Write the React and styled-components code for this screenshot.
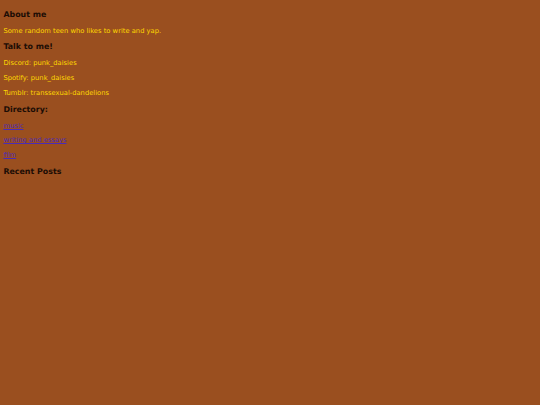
import React from 'react';
import styled, { createGlobalStyle } from 'styled-components';

const Global = createGlobalStyle`
  html, body {
    background: #9a4f1f;
  }
  body {
    margin: 3.4px;
    font-family: Verdana, "DejaVu Sans", sans-serif;
    font-size: 6.75px;
    color: #ffd700;
  }
`;

const Page = styled.div`
  display: flow-root;
  margin-top: -1.6px;
`;

const Heading = styled.h3`
  font-size: 7.9px;
  font-weight: bold;
  color: #1c0d05;
  margin: 7.9px 0;
`;

const Text = styled.p`
  margin: 6.75px 0;
`;

const Link = styled.a`
  color: #4a2bb8;
  text-decoration: underline;
`;

const links = ['music', 'writing and essays', 'film'];

export default function App() {
  return (
    <Page>
      <Global />
      <Heading>About me</Heading>
      <Text>Some random teen who likes to write and yap.</Text>
      <Heading>Talk to me!</Heading>
      <Text>Discord: punk_daisies</Text>
      <Text>Spotify: punk_daisies</Text>
      <Text>Tumblr: transsexual-dandelions</Text>
      <Heading>Directory:</Heading>
      {links.map((l) => (
        <Text key={l}>
          <Link href="#">{l}</Link>
        </Text>
      ))}
      <Heading>Recent Posts</Heading>
    </Page>
  );
}
